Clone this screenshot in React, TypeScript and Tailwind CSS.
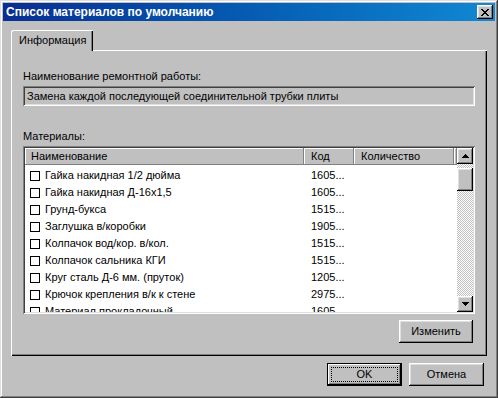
import React from 'react';

const raised =
  'shadow-[inset_-1px_-1px_#000,inset_1px_1px_#fff,inset_-2px_-2px_#808080,inset_2px_2px_#dfdfdf]';
const sunken =
  'shadow-[inset_1px_1px_#808080,inset_-1px_-1px_#fff,inset_2px_2px_#404040,inset_-2px_-2px_#dfdfdf]';

const materials = [
  { name: 'Гайка накидная 1/2 дюйма', code: '1605...' },
  { name: 'Гайка накидная Д-16х1,5', code: '1605...' },
  { name: 'Грунд-букса', code: '1515...' },
  { name: 'Заглушка в/коробки', code: '1905...' },
  { name: 'Колпачок вод/кор. в/кол.', code: '1515...' },
  { name: 'Колпачок сальника КГИ', code: '1515...' },
  { name: 'Круг сталь Д-6 мм. (пруток)', code: '1205...' },
  { name: 'Крючок крепления в/к к стене', code: '2975...' },
  { name: 'Материал прокладочный', code: '1605...' },
];

const Arrow = ({ down }: { down?: boolean }) => (
  <svg width="7" height="4" viewBox="0 0 7 4" shapeRendering="crispEdges">
    <path d={down ? 'M0 0H7L3.5 4Z' : 'M3.5 0L7 4H0Z'} fill="#000" />
  </svg>
);

const ScrollButton = ({ down }: { down?: boolean }) => (
  <div className={`h-[16px] w-[16px] bg-[#c0c0c0] flex items-center justify-center ${raised}`}>
    <Arrow down={down} />
  </div>
);

const App = () => {
  return (
    <div
      className="w-[498px] h-[398px] bg-[#c0c0c0] p-[3px] flex flex-col text-[11px] leading-[13px] text-black shadow-[inset_-1px_-1px_#404040,inset_1px_1px_#dfdfdf,inset_-2px_-2px_#808080,inset_2px_2px_#fff]"
      style={{ fontFamily: '"Liberation Sans", Arial, sans-serif' }}
    >
      {/* title bar */}
      <div className="h-[18px] flex items-center justify-between pl-[3px] pr-[2px] bg-linear-to-r from-[#0a2e92] to-[#1288d4]">
        <span className="text-white font-bold text-[12px] leading-[14px]">Список материалов по умолчанию</span>
        <div className={`w-[16px] h-[14px] bg-[#c0c0c0] flex items-center justify-center ${raised}`}>
          <svg width="8" height="7" viewBox="0 0 8 7" shapeRendering="crispEdges">
            <path d="M0 0h2v1h1v1h2v-1h1v-1h2v1h-1v1h-1v1h-1v1h1v1h1v1h1v1h-2v-1h-1v-1h-2v1h-1v1h-2v-1h1v-1h1v-1h1v-1h-1v-1h-1v-1h-1z" fill="#000" />
          </svg>
        </div>
      </div>

      <div className="flex-1 flex flex-col px-[8px] pt-[9px]">
        {/* tab */}
        <div className="relative z-10 -mb-px w-[82px] h-[21px] bg-[#c0c0c0] rounded-tl-[2px] flex items-center pl-[8px] shadow-[inset_1px_1px_#fff,inset_-1px_0_#000,inset_-2px_0_#808080]">
          Информация
        </div>

        {/* tab panel */}
        <div className="h-[306px] flex flex-col px-[12px] pt-[20px] shadow-[inset_1px_1px_#fff,inset_-1px_-1px_#000,inset_-2px_-2px_#808080]">
          <div>Наименование ремонтной работы:</div>
          <div className={`mt-[3px] h-[20px] flex items-center pl-[4px] bg-[#c0c0c0] ${sunken}`}>
            Замена каждой последующей соединительной трубки плиты
          </div>

          <div className="mt-[24px]">Материалы:</div>
          <div className={`mt-[3px] h-[168px] bg-white p-[2px] flex ${sunken}`}>
            <div className="flex-1 flex flex-col overflow-hidden">
              <div className="h-[17px] flex shrink-0">
                <div className="w-[279px] bg-[#c0c0c0] pl-[6px] flex items-center shadow-[inset_-1px_-1px_#808080,inset_1px_1px_#fff]">
                  Наименование
                </div>
                <div className="w-[50px] bg-[#c0c0c0] pl-[7px] flex items-center shadow-[inset_-1px_-1px_#808080,inset_1px_1px_#fff]">
                  Код
                </div>
                <div className="w-[100px] bg-[#c0c0c0] pl-[7px] flex items-center shadow-[inset_-1px_-1px_#808080,inset_1px_1px_#fff]">
                  Количество
                </div>
                <div className="flex-1 bg-[#c0c0c0] shadow-[inset_-1px_-1px_#808080,inset_1px_1px_#fff]" />
              </div>
              <div className="pt-[2px] flex flex-col">
                {materials.map((m, i) => (
                  <div key={i} className="h-[17px] flex items-center shrink-0">
                    <div className="w-[279px] flex items-center pl-[5px]">
                      <div className="w-[10px] h-[10px] border border-black bg-white shrink-0" />
                      <span className="ml-[5px] whitespace-nowrap">{m.name}</span>
                    </div>
                    <div className="pl-[7px]">{m.code}</div>
                  </div>
                ))}
              </div>
            </div>
            {/* scrollbar */}
            <div className="w-[16px] flex flex-col">
              <ScrollButton />
              <div className="flex-1 flex flex-col bg-[repeating-conic-gradient(#c0c0c0_0%_25%,#fff_0%_50%)] bg-[length:2px_2px]">
                <div className="h-[4px]" />
                <div className={`h-[23px] bg-[#c0c0c0] ${raised}`} />
              </div>
              <ScrollButton down />
            </div>
          </div>

          <div className="mt-[6px] flex justify-end pr-[2px]">
            <button className={`w-[74px] h-[23px] bg-[#c0c0c0] ${raised}`}>Изменить</button>
          </div>
        </div>

        {/* dialog buttons */}
        <div className="mt-[7px] flex justify-end gap-[7px] pr-[3px]">
          <button className="w-[75px] h-[23px] bg-[#c0c0c0] border border-black p-[3px] shadow-[inset_-1px_-1px_#000,inset_1px_1px_#fff,inset_-2px_-2px_#808080]">
            <div className="h-full border border-dotted border-black flex items-center justify-center">OK</div>
          </button>
          <button className={`w-[75px] h-[23px] bg-[#c0c0c0] ${raised}`}>Отмена</button>
        </div>
      </div>
    </div>
  );
};

export default App;
